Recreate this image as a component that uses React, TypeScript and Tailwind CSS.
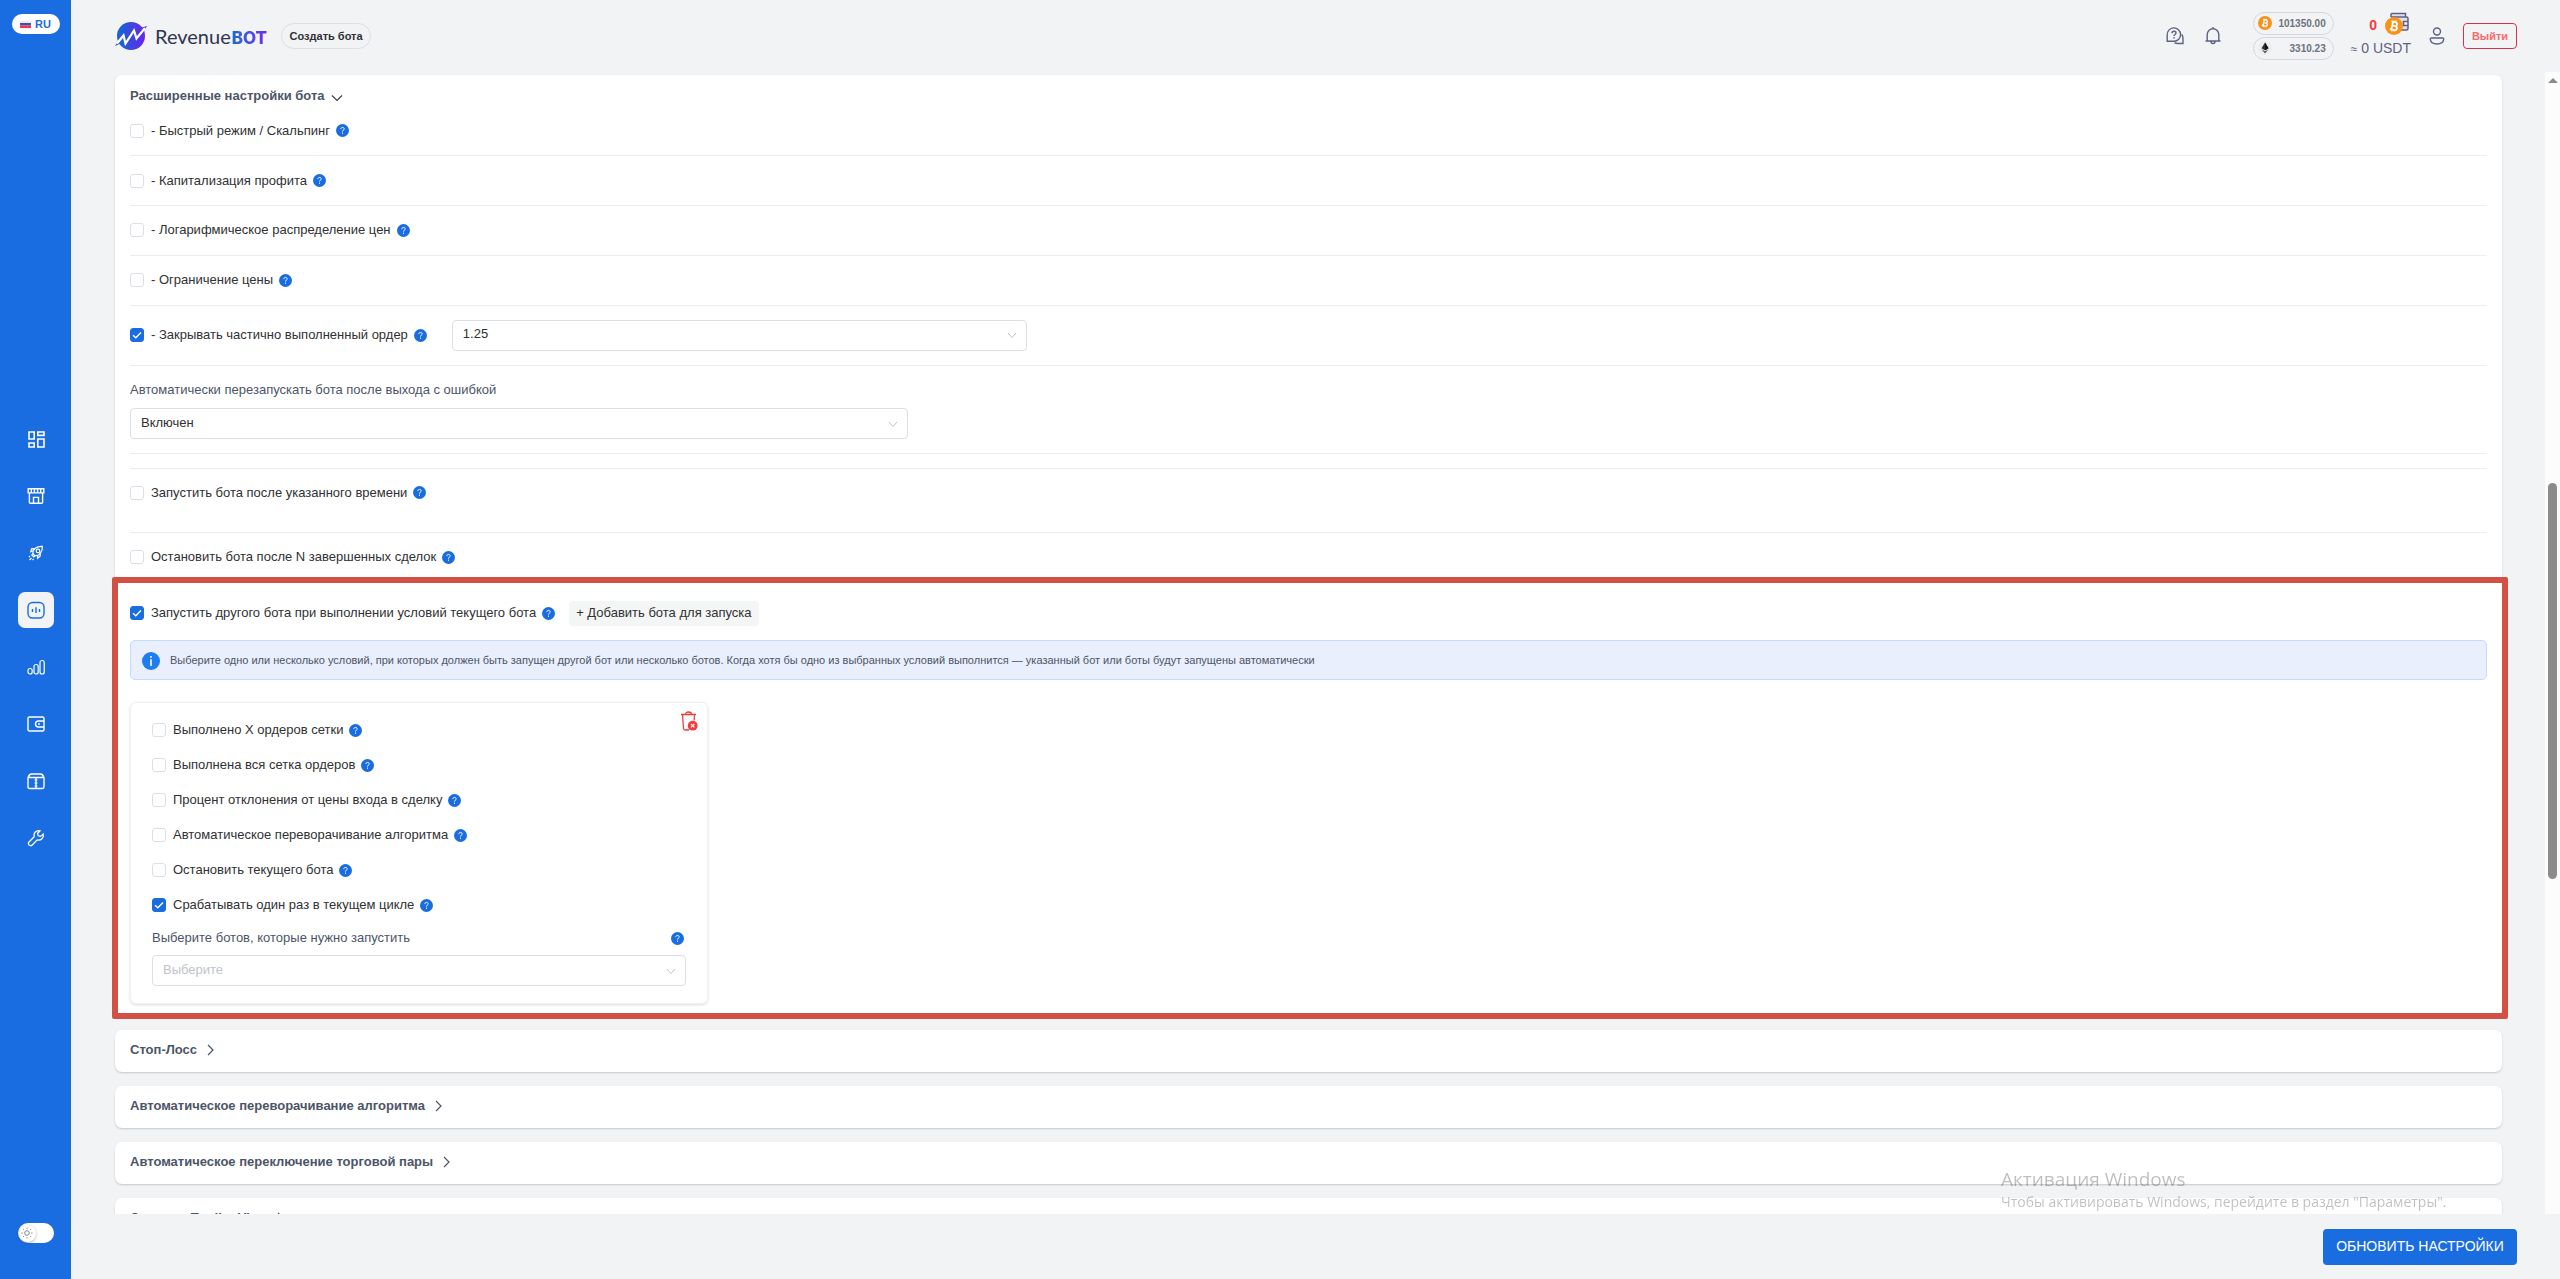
import React, { useId, useState } from "react";
import type { ReactNode } from "react";

function Help() {
  return (
    <button type="button" aria-label="Справка" className="flex size-[13px] shrink-0 items-center justify-center rounded-full bg-[#1a6de0]">
      <svg viewBox="0 0 13 13" className="size-[13px]" fill="none" stroke="#fff" strokeWidth="1">
        <path d="M4.8 5.1c0-1 .7-1.700 1.700-1.700s1.700.6 1.700 1.500c0 1.200-1.700 1.300-1.700 2.700M6.500 8.600v1.200" />
      </svg>
    </button>
  );
}

function Check({ label, checked = false }: { label: string; checked?: boolean }) {
  const id = useId();
  const [on, setOn] = useState(checked);
  return (
    <div className="flex items-center">
      <span className="relative flex size-[14px] shrink-0">
        <input
          id={id}
          type="checkbox"
          checked={on}
          onChange={(e) => setOn(e.target.checked)}
          className="size-[14px] appearance-none rounded-[3px] border border-[#dcdfe6] bg-white checked:border-[#1a6de0] checked:bg-[#1a6de0]"
        />
        {on && (
          <svg viewBox="0 0 14 14" className="pointer-events-none absolute inset-0 size-[14px]" fill="none" stroke="#fff" strokeWidth="1.400">
            <path d="M3 7.300 5.800 9.800 11 4.600" />
          </svg>
        )}
      </span>
      <label htmlFor={id} className="pl-[7px] text-[13px] leading-[18px] text-[#303133]">
        {label}
      </label>
      <span className="pl-[6px]">
        <Help />
      </span>
    </div>
  );
}

function Select({ label, value, className, placeholder = false }: { label: string; value: string; className: string; placeholder?: boolean }) {
  return (
    <div className={"relative " + className}>
      <select
        aria-label={label}
        className={
          "h-full w-full appearance-none rounded-[4px] border border-[#dcdfe6] bg-white px-[10px] pb-[2px] text-[13px] " +
          (placeholder ? "text-[#c0c4cc]" : "text-[#303133]")
        }
      >
        <option>{value}</option>
      </select>
      <svg viewBox="0 0 10 10" className="pointer-events-none absolute top-1/2 right-[10px] size-[10px] -translate-y-1/2" fill="none" stroke="#c0c4cc" strokeWidth="1">
        <path d="M1 3l4 4.500L9 3" />
      </svg>
    </div>
  );
}

function Row({ className, children }: { className: string; children: ReactNode }) {
  return <div className={"flex items-center border-b border-[#ebeef0] " + className}>{children}</div>;
}

function Collapsed({ title }: { title: string }) {
  return (
    <section className="h-[42px] shrink-0 rounded-[7px] bg-white px-[15px] shadow-[0_1px_2px_rgba(0,0,0,0.18)]">
      <button type="button" className="flex h-[42px] items-center gap-[10px] pb-[2px] text-[13px] font-bold text-[#4c5567]">
        {title}
        <svg viewBox="0 0 7 12" className="h-[12px] w-[7px]" fill="none" stroke="#4b5563" strokeWidth="1.200">
          <path d="M1 1l5 5-5 5" />
        </svg>
      </button>
    </section>
  );
}

const navIcons: { name: string; active?: boolean; icon: ReactNode }[] = [
  {
    name: "Панель",
    icon: (
      <g strokeWidth="1.600">
        <path d="M2 2h5.200v7H2zM10.800 2H17v3.400h-6.200zM10.800 9H17v8h-6.200zM2 13h5.200v4H2z" />
      </g>
    ),
  },
  {
    name: "Маркет",
    icon: (
      <g strokeWidth="1.400">
        <path d="M1.200 1.700h15.600v4.200H1.200zM2.400 6v9.200q0 1.100 1.100 1.100h11q1.100 0 1.100-1.100V6M6.500 16v-5.600h5V16M4.300 2v3.800M7.400 2v3.800M10.600 2v3.800M13.700 2v3.800" />
      </g>
    ),
  },
  {
    name: "Запуск",
    icon: (
      <g strokeWidth="1.200">
        <path d="M5.800 9.500C5.500 5.500 9.500 2 15.300 2.300c.6 5.300-3 9.400-7.200 9.600zM6 6.800 3.800 7.800 4.500 4.800 7.500 4.700M10.500 11.200l.2 3 2.500-2.200V9M5.800 9.500l-1 1.500 2 2 1.300-1.100M2 13l1.200-1.200M2.500 16l2-2M5.500 16l1-1" />
        <circle cx="11" cy="6.900" r="1.800" />
      </g>
    ),
  },
  {
    name: "Боты",
    active: true,
    icon: (
      <g strokeWidth="1.400">
        <rect x="1" y="1.500" width="16" height="15.500" rx="4.500" />
        <path d="M5.500 8v3M9 6.300v5.700M12.500 8v3" />
      </g>
    ),
  },
  {
    name: "Статистика",
    icon: (
      <g strokeWidth="1.200">
        <rect x="1" y="10.500" width="4.200" height="5.500" rx="2" />
        <rect x="7" y="6.500" width="4.200" height="9.500" rx="2" />
        <rect x="13" y="2.500" width="4.200" height="13.500" rx="2" />
      </g>
    ),
  },
  {
    name: "Кошелёк",
    icon: (
      <g strokeWidth="1.400">
        <rect x="1" y="2" width="16" height="14" rx="1.500" />
        <path d="M17 6h-5.500a3 3 0 0 0 0 6H17M11 9h2" />
      </g>
    ),
  },
  {
    name: "Архив",
    icon: (
      <g strokeWidth="1.400">
        <path d="M1 5.500h16v9.300q0 1.700-1.700 1.700H2.700Q1 16.500 1 14.800zM1.300 5.500Q2 2 4.500 2h9Q16 2 16.700 5.500M9 5.500v11" />
        <path d="M7.500 8h3M7.500 11h3M7.500 14h3" strokeWidth="1" />
      </g>
    ),
  },
  {
    name: "Инструменты",
    icon: (
      <g strokeWidth="1.300">
        <path d="M7.200 7.800C6.200 4 9.200 1 13 1.800L10.600 4.300l.6 2.500 2.500.6 2.500-2.300c.8 3.800-2.200 6.800-6 5.800L5.200 16a2.100 2.100 0 0 1-3.200-3z" />
      </g>
    ),
  },
];

function Btc({ className }: { className: string }) {
  return (
    <svg viewBox="0 0 16 16" className={className}>
      <circle cx="8" cy="8" r="8" fill="#f7931a" />
      <g transform="rotate(12 8 8)" fill="none" stroke="#fff" strokeWidth="1.500">
        <path d="M5 4.500h3.600a1.700 1.700 0 0 1 0 3.400H6.200M6.200 7.900h3a1.800 1.800 0 0 1 0 3.600H5M6.400 4.500v7" />
        <path d="M7 3v1.500M9 3v1.500M7 11.500V13M9 11.500V13" strokeWidth="1" />
      </g>
    </svg>
  );
}

export default function App() {
  return (
    <div className="flex h-screen overflow-hidden bg-[#f2f3f5] font-['Liberation_Sans',Arial,sans-serif] text-[#303133]">
      <aside className="flex w-[71px] shrink-0 flex-col items-center justify-between bg-[#1a6de0] pt-[14px] pb-[36px]">
        <button type="button" className="flex h-[20px] w-[48px] items-center justify-center gap-1 rounded-full bg-white text-[11px] font-bold text-[#1a6de0]">
          <svg viewBox="0 0 11 7" className="h-[7px] w-[11px]">
            <path fill="#eceef2" d="M0 0h11v2H0z" />
            <path fill="#3b4fb0" d="M0 2h11v2.500H0z" />
            <path fill="#f0384a" d="M0 4.500h11V7H0z" />
          </svg>
          RU
        </button>
        <nav className="flex flex-col gap-[21px] pt-[20px]">
          {navIcons.map((n) => (
            <a key={n.name} href="#" aria-label={n.name} className={"flex size-9 items-center justify-center rounded-[7px] " + (n.active ? "bg-[#f2f3f5] text-[#1a6de0]" : "text-white")}>
              <svg viewBox="0 0 18 18" className="size-[18px]" fill="none" stroke="currentColor">
                {n.icon}
              </svg>
            </a>
          ))}
        </nav>
        <button type="button" role="switch" aria-checked="false" aria-label="Тёмная тема" className="flex h-[20px] w-[36px] items-center rounded-full bg-white pl-px">
          <span className="flex size-[17px] items-center justify-center rounded-full bg-white shadow-[0_1px_3px_rgba(0,0,0,0.3)]">
            <svg viewBox="0 0 12 12" className="size-[12px]" fill="none" stroke="#888" strokeWidth="1">
              <circle cx="6" cy="6" r="2.300" />
              <path d="M6 .5v1.300M6 10.200v1.300M.5 6h1.300M10.200 6h1.300M2.100 2.100l.9.9M9 9l.9.9M9.900 2.100l-.9.9M3 9l-.9.9" />
            </svg>
          </span>
        </button>
      </aside>

      <div className="flex min-w-0 flex-1 flex-col">
        <header className="flex h-[72px] shrink-0 items-center pr-[43px] pl-[44px]">
          <a href="#" className="flex items-center">
            <svg viewBox="0 0 32 28" className="h-[28px] w-[32px]">
              <defs>
                <linearGradient id="mark" x1="0" x2="1">
                  <stop offset="0" stopColor="#0f6ad0" />
                  <stop offset="1" stopColor="#6a24ee" />
                </linearGradient>
              </defs>
              <circle cx="16" cy="14" r="14" fill="url(#mark)" />
              <path d="M25 6l7-2-3.500 6zM7 21l-7 3 4-6z" fill="url(#mark)" />
              <path d="M2 21.500 8.500 13.500 10.500 21.500 19 8.500 21.500 16.500 30 6" fill="none" stroke="#fff" strokeWidth="2.200" />
            </svg>
            <span className="flex items-baseline gap-px pl-2">
              <span className="font-['Lato',sans-serif] text-[20px] text-[#2f3550]">Revenue</span>
              <span className="bg-gradient-to-r from-[#0f6ad0] to-[#6a24ee] bg-clip-text font-['Inter',sans-serif] text-[17px] font-extrabold text-transparent">BOT</span>
            </span>
          </a>
          <button type="button" className="ml-[14px] h-[26px] w-[90px] rounded-full border border-[#dcdfe6] text-[11px] font-bold text-[#303133]">
            Создать бота
          </button>

          <div className="ml-auto flex items-center">
            <button type="button" aria-label="Поддержка">
              <svg viewBox="0 0 18 18" className="size-[18px]" fill="none" stroke="#5f6184" strokeWidth="1.400">
                <path d="M1.200 14.300V8A6.700 6.700 0 1 1 8 14.300zM15.800 7.500c.9 1.300 1.200 2.500 1.200 4v5h-5c-1.500 0-2.500-.3-3.500-.9" />
                <path d="M6 6.200c0-1.200.8-1.900 2-1.900s2 .7 2 1.700c0 1.400-2 1.500-2 3M8 10v1.500" />
              </svg>
            </button>
            <button type="button" aria-label="Уведомления" className="ml-[20px]">
              <svg viewBox="0 0 18 18" className="size-[18px]" fill="none" stroke="#5f6184" strokeWidth="1.400">
                <path d="M1.500 14h15M3.200 14V7.500a5.800 5.800 0 0 1 11.600 0V14M7 14.500a2 2 0 0 0 4 0M9 0v2" />
              </svg>
            </button>
            <div className="ml-[31px] flex flex-col gap-[2px] text-[10px] font-bold text-[#6b7280]">
              <div className="flex h-[23px] w-[81px] items-center justify-between rounded-full border border-[#d4d6de] pr-[7px] pb-px pl-1">
                <Btc className="size-[14px]" />
                101350.00
              </div>
              <div className="flex h-[23px] w-[81px] items-center justify-between rounded-full border border-[#d4d6de] pr-[7px] pb-px pl-1">
                <svg viewBox="0 0 14 14" className="size-[14px]">
                  <circle cx="7" cy="7" r="7" fill="#ecedef" />
                  <path d="M7 1.500l3.500 5.700L7 9.300 3.500 7.200z" fill="#333" />
                  <path d="M7 12.500L3.500 8.200 7 10.200l3.500-2z" fill="#555" />
                  <path d="M7 1.500v7.800l3.500-2.100z" fill="#111" />
                </svg>
                3310.23
              </div>
            </div>
            <div className="ml-[17px] flex flex-col items-end text-[#5f6184]">
              <div className="flex h-[23px] items-center gap-2 pr-[2px] text-[14px] font-bold text-[#f03e3e]">
                <span className="pt-[4px]">0</span>
                <span className="relative flex h-[23px] w-[24px]">
                  <svg viewBox="0 0 24 22" className="absolute inset-0 h-[22px] w-[24px]" fill="none" stroke="#5f6184" strokeWidth="1.500">
                    <path d="M6 5V2.500q0-1 1-1h13.500V5M6 5h15.500q1.500 0 1.500 1.500v10q0 1.500-1.500 1.500H8M23 9.500h-4.500v4H23" fill="#dfe1e8" />
                  </svg>
                  <Btc className="absolute bottom-0 left-0 size-[18px]" />
                </span>
              </div>
              <div className="pt-[2px] text-[14px] leading-[23px]">
                <span className="text-[12px]">≈</span> 0 USDT
              </div>
            </div>
            <button type="button" aria-label="Профиль" className="ml-[18px]">
              <svg viewBox="0 0 16 18" className="h-[18px] w-[16px]" fill="none" stroke="#5f6184" strokeWidth="1.400">
                <circle cx="8" cy="4.500" r="3.500" />
                <path d="M2.500 11h11q1.300 0 1.200 1.300C14.400 15.500 11.500 17 8 17s-6.400-1.500-6.700-4.700Q1.200 11 2.500 11z" />
              </svg>
            </button>
            <button type="button" className="ml-[18px] h-[26px] w-[54px] rounded-[4px] border border-[#d9304f] text-[11px] font-bold text-[#f56c6c]">
              Выйти
            </button>
          </div>
        </header>

        <div className="flex min-h-0 flex-1">
          <main className="flex min-w-0 flex-1 flex-col gap-[14px] overflow-hidden pt-[3px] pr-[43px] pl-[44px]">
            <section className="shrink-0 rounded-[7px] bg-white px-[15px] pt-[11px] shadow-[0_1px_2px_rgba(0,0,0,0.18)]">
              <button type="button" className="flex h-[20px] items-center gap-[6px] text-[13px] font-bold text-[#4c5567]">
                Расширенные настройки бота
                <svg viewBox="0 0 12 12" className="size-[12px]" fill="none" stroke="#374151" strokeWidth="1.200">
                  <path d="M1 5.500l5 5 5-5" />
                </svg>
              </button>
              <Row className="h-[50px]">
                <Check label="- Быстрый режим / Скальпинг" />
              </Row>
              <Row className="h-[50px]">
                <Check label="- Капитализация профита" />
              </Row>
              <Row className="h-[50px] pb-px">
                <Check label="- Логарифмическое распределение цен" />
              </Row>
              <Row className="h-[50px] pb-px">
                <Check label="- Ограничение цены" />
              </Row>
              <Row className="h-[60px] gap-[25px] pb-px">
                <Check label="- Закрывать частично выполненный ордер" checked />
                <Select label="Процент исполнения" value="1.25" className="h-[31px] w-[575px]" />
              </Row>
              <div className="border-b border-[#ebeef0] pt-[14px] pb-[14px]">
                <p className="pb-[8px] text-[13px] leading-[20px] text-[#4c5567]">Автоматически перезапускать бота после выхода с ошибкой</p>
                <Select label="Автоматически перезапускать бота" value="Включен" className="h-[31px] w-[778px]" />
              </div>
              <Row className="h-[15px]">{null}</Row>
              <Row className="h-[64px] pb-[16px]">
                <Check label="Запустить бота после указанного времени" />
              </Row>
              <div className="flex h-[50px] items-center pb-[2px]">
                <Check label="Остановить бота после N завершенных сделок" />
              </div>

              <div className="relative pt-[17px] pb-[12px]">
                <div className="pointer-events-none absolute -top-[6px] -right-[21px] -bottom-[3px] -left-[18px] rounded-[2px] border-6 border-[#d25144]" />
                <div className="flex h-[26px] items-center gap-[14px]">
                  <Check label="Запустить другого бота при выполнении условий текущего бота" checked />
                  <button type="button" className="h-[25px] rounded-[4px] bg-[#f4f6f5] px-[7px] text-[13px] text-[#303133]">
                    + Добавить бота для запуска
                  </button>
                </div>
                <div className="mt-[14px] flex h-[40px] items-center gap-[10px] rounded-[5px] border border-[#c3dcfb] bg-[#e9effc] px-[11px] pt-px text-[11px] text-[#4c5567]">
                  <svg viewBox="0 0 18 18" className="size-[18px]">
                    <circle cx="9" cy="9" r="9" fill="#1f7df2" />
                    <path d="M9 4v1.800M9 7.300V14" stroke="#fff" strokeWidth="1.600" />
                  </svg>
                  Выберите одно или несколько условий, при которых должен быть запущен другой бот или несколько ботов. Когда хотя бы одно из выбранных условий выполнится — указанный бот или боты будут запущены автоматически
                </div>
                <div className="relative mt-[22px] w-[578px] rounded-[6px] border border-[#eff0f2] px-[21px] pt-[18px] pb-[17px] shadow-[0_1px_3px_rgba(0,0,0,0.14)]">
                  <button type="button" aria-label="Удалить" className="absolute top-[8px] right-[9px]">
                    <svg viewBox="0 0 18 20" className="h-[20px] w-[18px]" fill="none" stroke="#f03e3e" strokeWidth="1.300">
                      <path d="M1 3.500h15M5.500 3.500q0-2.500 3-2.500t3 2.500M2.500 3.500l1 14q.1 1.500 1.500 1.500h4M14.500 3.500l-.4 6" />
                      <circle cx="12.700" cy="14.700" r="4.900" fill="#f03e3e" stroke="none" />
                      <path d="M11 13l3.400 3.400M14.400 13L11 16.400" stroke="#fff" strokeWidth="1.200" />
                    </svg>
                  </button>
                  <div className="flex flex-col gap-[17px]">
                    <Check label="Выполнено X ордеров сетки" />
                    <Check label="Выполнена вся сетка ордеров" />
                    <Check label="Процент отклонения от цены входа в сделку" />
                    <Check label="Автоматическое переворачивание алгоритма" />
                    <Check label="Остановить текущего бота" />
                    <Check label="Срабатывать один раз в текущем цикле" checked />
                  </div>
                  <div className="flex items-center justify-between pt-[14px] pr-[2px] pb-[7px] text-[13px] leading-[20px] text-[#4c5567]">
                    Выберите ботов, которые нужно запустить
                    <Help />
                  </div>
                  <Select label="Боты для запуска" value="Выберите" placeholder className="h-[31px] w-full" />
                </div>
              </div>
            </section>
            <Collapsed title="Стоп-Лосс" />
            <Collapsed title="Автоматическое переворачивание алгоритма" />
            <Collapsed title="Автоматическое переключение торговой пары" />
            <Collapsed title="Сигналы TradingView" />
          </main>
          <div className="flex w-[15px] shrink-0 flex-col items-center bg-[#fcfcfc] pt-[6px]">
            <svg viewBox="0 0 10 5" className="h-[5px] w-[10px]">
              <path d="M5 0l5 5H0z" fill="#8b8b8b" />
            </svg>
            <div className="mt-[400px] h-[396px] w-[9px] rounded-full bg-[#8b8b8b]" />
          </div>
        </div>

        <footer className="flex h-[65px] shrink-0 items-center justify-end pr-[43px]">
          <button type="button" className="h-[36px] w-[194px] rounded-[4px] bg-[#1a6de0] text-[14px] text-white">
            ОБНОВИТЬ НАСТРОЙКИ
          </button>
        </footer>
      </div>

      <div className="pointer-events-none fixed right-[104px] bottom-[67px] w-[455px] font-['Open_Sans',sans-serif] whitespace-nowrap text-[#00000040]">
        <p className="text-[19px] leading-[26px]">Активация Windows</p>
        <p className="text-[14px] leading-[20px]">Чтобы активировать Windows, перейдите в раздел "Параметры".</p>
      </div>
    </div>
  );
}
